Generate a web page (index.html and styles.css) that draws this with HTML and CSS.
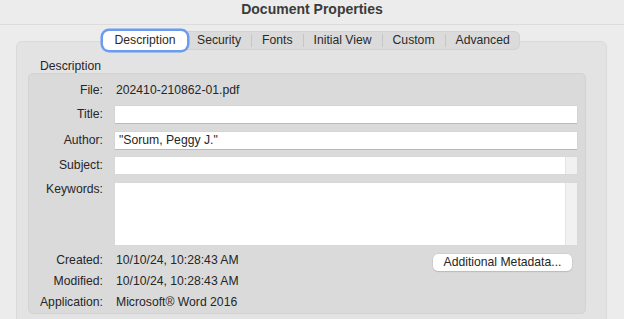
FILE: index.html
```html
<!DOCTYPE html>
<html>
<head>
<meta charset="utf-8">
<link rel="stylesheet" href="styles.css">
</head>
<body>
<div class="titlebar">Document Properties</div>
<div class="content">
  <div class="tabs">
    <div class="tab selected">Description</div>
    <div class="tab">Security</div>
    <div class="sep"></div>
    <div class="tab">Fonts</div>
    <div class="sep"></div>
    <div class="tab">Initial View</div>
    <div class="sep"></div>
    <div class="tab">Custom</div>
    <div class="sep"></div>
    <div class="tab">Advanced</div>
  </div>
  <div class="tabview">
    <div class="group-label">Description</div>
    <div class="group">
      <div class="row r-file"><div class="label">File:</div><div class="value">202410-210862-01.pdf</div></div>
      <div class="row r-title"><div class="label">Title:</div><div class="field"></div></div>
      <div class="row r-author"><div class="label">Author:</div><div class="field">"Sorum, Peggy J."</div></div>
      <div class="row r-subject"><div class="label">Subject:</div><div class="field scroll"><span class="track"></span></div></div>
      <div class="row r-keywords"><div class="label">Keywords:</div><div class="field scroll tall"><span class="track"></span></div></div>
      <div class="row r-created"><div class="label">Created:</div><div class="value">10/10/24, 10:28:43 AM</div><button class="btn">Additional Metadata...</button></div>
      <div class="row r-modified"><div class="label">Modified:</div><div class="value">10/10/24, 10:28:43 AM</div></div>
      <div class="row r-app"><div class="label">Application:</div><div class="value">Microsoft® Word 2016</div></div>
    </div>
  </div>
</div>
</body>
</html>
```
FILE: styles.css
```css
* { box-sizing: border-box; }
html, body { margin: 0; padding: 0; }
body {
  background: #ececec;
  font-family: "Liberation Sans", Arial, sans-serif;
  font-size: 12.2px;
  color: #262626;
  width: 624px;
  height: 319px;
  overflow: hidden;
}
.titlebar {
  height: 25px;
  border-bottom: 1px solid #dcdcdc;
  text-align: center;
  font-weight: bold;
  font-size: 14px;
  color: #3b3b3b;
  line-height: 18px;
}
.content {
  padding: 6px 17px 0 16px;
}
.tabs {
  display: flex;
  align-items: center;
  width: max-content;
  height: 19px;
  margin-left: 87px;
  background: #dbdbdb;
  border-radius: 6px;
  box-shadow: inset 0 0 0 1px #d2d2d2;
  position: relative;
  z-index: 1;
  white-space: nowrap;
}
.tab {
  flex: none;
  padding: 0 10px;
  line-height: 19px;
  color: #2a2a2a;
}
.tab.selected {
  background: #fff;
  border-radius: 6px;
  box-shadow: 0 0 0 2.5px #6b9cf0;
  width: 84px;
  text-align: center;
  padding: 0;
  height: 19px;
  line-height: 19px;
}
.sep {
  flex: none;
  width: 1px;
  height: 13px;
  background: #c6c6c6;
}
.tabview {
  margin-top: -9px;
  height: 300px;
  background: #e3e3e3;
  border: 1px solid #dadada;
  border-radius: 6px;
  padding: 17px 20px 0 11px;
}
.group-label {
  padding-left: 12px;
  line-height: 14px;
  height: 14px;
}
.group {
  background: #dadada;
  border: 1px solid #d3d3d3;
  border-radius: 5px;
  height: 241px;
  padding-top: 7px;
  padding-right: 8px;
}
.row {
  display: flex;
  align-items: flex-start;
}
.label {
  width: 74px;
  text-align: right;
  flex: none;
  margin-right: 12px;
  line-height: 17px;
}
.value {
  line-height: 18px;
  padding-left: 1px;
}
.field {
  flex: 1;
  height: 17px;
  background: #fff;
  line-height: 17px;
  padding-left: 4px;
  box-shadow: 0 1px 0 #b9b9b9, 0 0 0 0.5px #cfcfcf;
  position: relative;
}
.field.scroll { box-shadow: 0 0 0 0.5px #d6d6d6; }
.field.tall { height: 62px; }
.track {
  position: absolute;
  top: 0;
  right: 0;
  bottom: 0;
  width: 12px;
  background: #f1f1f1;
  border-left: 1px solid #e4e4e4;
}
.r-file { height: 18px; }
.r-file .label { line-height: 18px; }
.r-title { margin-top: 7px; }
.r-author { margin-top: 9px; }
.r-subject { margin-top: 8px; }
.r-keywords { margin-top: 9px; }
.r-keywords .label { line-height: 13px; }
.r-created { margin-top: 6px; height: 18px; }
.r-created .label, .r-modified .label, .r-app .label { line-height: 18px; }
.r-modified { margin-top: 3px; }
.r-app { margin-top: 3px; }
.btn {
  margin-left: auto;
  margin-right: 5px;
  margin-top: 3px;
  width: 139px;
  height: 17px;
  background: #fff;
  border: none;
  border-radius: 5px;
  box-shadow: 0 0 0 0.5px #c4c4c4, 0 1px 1px #b5b5b5;
  font-family: "Liberation Sans", Arial, sans-serif;
  font-size: 12.2px;
  color: #262626;
  padding: 0;
  line-height: 17px;
}
```
